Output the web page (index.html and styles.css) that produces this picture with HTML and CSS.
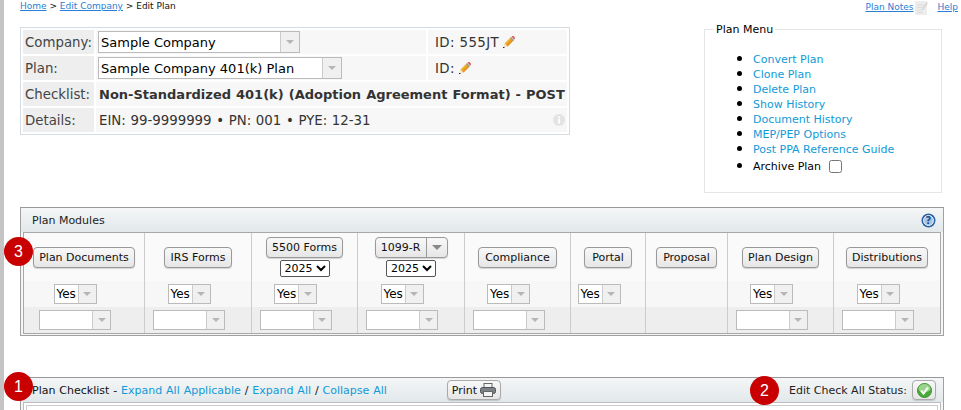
FILE: index.html
```html
<!DOCTYPE html>
<html lang="en">
<head>
    <meta charset="UTF-8">
    <title>Edit Plan</title>
    <link rel="stylesheet" href="styles.css">
</head>
<body>
    <div class="top">
        <div class="top-left">
            <div class="breadcrumb"><a href="#">Home</a> &gt; <a href="#">Edit Company</a> &gt; Edit Plan</div>
            <div class="info">
                <div class="info-label">Company:</div>
                <div class="info-value">
                    <span class="combo combo-company"><span class="combo-text">Sample Company</span><span class="combo-arrow"></span></span>
                </div>
                <div class="info-id"><span>ID: 555JT</span>
                    <svg class="pencil" viewBox="0 0 12 12"><path d="M1.500 7.500L7.500 1.500l3 3-6 6z" fill="#efb02e"/><path d="M3 9L9 3l1.500 1.500-6 6z" fill="#e5941f"/><path d="M7.500 1.500l3 3" stroke="#9a9a9a" stroke-width="1.500"/><path d="M8.500.8L9.300 0H10.500L12 1.500V2.700L11.200 3.500z" fill="#d9605c"/><path d="M1.500 7.500l3 3-3 .5-.5-.5z" fill="#f1dfc0"/><rect x="0" y="11" width="1.500" height="1" fill="#222"/></svg>
                </div>
                <div class="info-label">Plan:</div>
                <div class="info-value">
                    <span class="combo combo-plan"><span class="combo-text">Sample Company 401(k) Plan</span><span class="combo-arrow"></span></span>
                </div>
                <div class="info-id"><span>ID:</span>
                    <svg class="pencil" viewBox="0 0 12 12"><path d="M1.500 7.500L7.500 1.500l3 3-6 6z" fill="#efb02e"/><path d="M3 9L9 3l1.500 1.500-6 6z" fill="#e5941f"/><path d="M7.500 1.500l3 3" stroke="#9a9a9a" stroke-width="1.500"/><path d="M8.500.8L9.300 0H10.500L12 1.500V2.700L11.200 3.500z" fill="#d9605c"/><path d="M1.500 7.500l3 3-3 .5-.5-.5z" fill="#f1dfc0"/><rect x="0" y="11" width="1.500" height="1" fill="#222"/></svg>
                </div>
                <div class="info-label">Checklist:</div>
                <div class="info-value info-wide info-bold"><span>Non-Standardized 401(k) (Adoption Agreement Format) - POST</span></div>
                <div class="info-label">Details:</div>
                <div class="info-value info-wide info-details">
                    <span>EIN: 99-9999999 • PN: 001 • PYE: 12-31</span>
                    <svg class="info-icon" viewBox="0 0 12 12"><circle cx="6" cy="6" r="6" fill="#e4e4e4"/><rect x="5" y="5" width="2" height="4.500" fill="#fff"/><rect x="5" y="2.500" width="2" height="1.600" fill="#fff"/></svg>
                </div>
            </div>
        </div>
        <div class="top-right">
            <div class="top-links">
                <a href="#">Plan Notes</a>
                <svg class="note-icon" viewBox="0 0 13 15"><rect x="0" y="1" width="12" height="14" fill="#ededed"/><path d="M2 5h8M2 7.500h8M2 10h6M2 12.500h6" stroke="#dcdcdc"/><path d="M7 9l4.500-7 1.500 1-4.500 7z" fill="#d8d8d8"/></svg>
                <a class="help-link" href="#">Help</a>
            </div>
            <fieldset class="plan-menu">
                <legend>Plan Menu</legend>
                <ul>
                    <li><a href="#">Convert Plan</a></li>
                    <li><a href="#">Clone Plan</a></li>
                    <li><a href="#">Delete Plan</a></li>
                    <li><a href="#">Show History</a></li>
                    <li><a href="#">Document History</a></li>
                    <li><a href="#">MEP/PEP Options</a></li>
                    <li><a href="#">Post PPA Reference Guide</a></li>
                    <li class="archive">Archive Plan <input type="checkbox"></li>
                </ul>
            </fieldset>
        </div>
    </div>

    <div class="panel modules-panel">
        <div class="panel-head">
            <span>Plan Modules</span>
            <svg class="help-icon" viewBox="0 0 15 15"><circle cx="7.500" cy="7.500" r="7" fill="#2c64a6"/><circle cx="7.500" cy="7.500" r="5" fill="#a9c6e6" stroke="#e8f0f8"/><text x="7.500" y="11" text-anchor="middle" class="help-mark">?</text></svg>
        </div>
        <div class="modules">
            <div class="cell r1"><button class="btn">Plan Documents</button></div>
            <div class="cell r1"><button class="btn btn-wide">IRS Forms</button></div>
            <div class="cell r1">
                <button class="btn btn-small">5500 Forms</button>
                <select class="year"><option>2025</option></select>
            </div>
            <div class="cell r1">
                <span class="btn btn-small split"><span class="split-text">1099-R</span><span class="split-arrow"></span></span>
                <select class="year"><option>2025</option></select>
            </div>
            <div class="cell r1"><button class="btn btn-wide">Compliance</button></div>
            <div class="cell r1"><button class="btn btn-portal">Portal</button></div>
            <div class="cell r1"><button class="btn btn-wide">Proposal</button></div>
            <div class="cell r1"><button class="btn">Plan Design</button></div>
            <div class="cell r1"><button class="btn">Distributions</button></div>

            <div class="cell r2"><span class="combo combo-yes"><span class="combo-text">Yes</span><span class="combo-arrow"></span></span></div>
            <div class="cell r2"><span class="combo combo-yes"><span class="combo-text">Yes</span><span class="combo-arrow"></span></span></div>
            <div class="cell r2"><span class="combo combo-yes"><span class="combo-text">Yes</span><span class="combo-arrow"></span></span></div>
            <div class="cell r2"><span class="combo combo-yes"><span class="combo-text">Yes</span><span class="combo-arrow"></span></span></div>
            <div class="cell r2"><span class="combo combo-yes"><span class="combo-text">Yes</span><span class="combo-arrow"></span></span></div>
            <div class="cell r2"><span class="combo combo-yes"><span class="combo-text">Yes</span><span class="combo-arrow"></span></span></div>
            <div class="cell r2"></div>
            <div class="cell r2"><span class="combo combo-yes"><span class="combo-text">Yes</span><span class="combo-arrow"></span></span></div>
            <div class="cell r2"><span class="combo combo-yes"><span class="combo-text">Yes</span><span class="combo-arrow"></span></span></div>

            <div class="cell r3"><span class="combo combo-empty"><span class="combo-text"></span><span class="combo-arrow"></span></span></div>
            <div class="cell r3"><span class="combo combo-empty"><span class="combo-text"></span><span class="combo-arrow"></span></span></div>
            <div class="cell r3"><span class="combo combo-empty"><span class="combo-text"></span><span class="combo-arrow"></span></span></div>
            <div class="cell r3"><span class="combo combo-empty"><span class="combo-text"></span><span class="combo-arrow"></span></span></div>
            <div class="cell r3"><span class="combo combo-empty"><span class="combo-text"></span><span class="combo-arrow"></span></span></div>
            <div class="cell r3"></div>
            <div class="cell r3"></div>
            <div class="cell r3"><span class="combo combo-empty"><span class="combo-text"></span><span class="combo-arrow"></span></span></div>
            <div class="cell r3"><span class="combo combo-empty"><span class="combo-text"></span><span class="combo-arrow"></span></span></div>
        </div>
        <span class="badge badge-3">3</span>
    </div>

    <div class="panel checklist-panel">
        <div class="panel-head checklist-head">
            <div class="checklist-title">Plan Checklist - <a href="#">Expand All Applicable</a> / <a href="#">Expand All</a> / <a href="#">Collapse All</a></div>
            <button class="btn print-btn">Print
                <svg class="print-icon" viewBox="0 0 16 14"><rect x="4" y=".5" width="8" height="4" fill="#f4f4f4" stroke="#666"/><rect x=".5" y="4.500" width="15" height="6" rx="2" fill="#7c8287" stroke="#4e5256"/><rect x="3.500" y="8.500" width="9" height="5" fill="#f4f4f4" stroke="#666"/></svg>
            </button>
            <div class="status">Edit Check All Status:
                <span class="btn status-btn">
                    <svg class="check-icon" viewBox="0 0 15 15"><circle cx="7.500" cy="7.500" r="7" fill="#49a93a" stroke="#3a8f2d"/><path d="M1.500 6a6 5 0 0 1 12 0a6 3 0 0 1-12 0z" fill="#9ad38c"/><path d="M4 7.500l2.500 3 4.500-6" fill="none" stroke="#f2f7ef" stroke-width="2.200"/></svg>
                </span>
            </div>
        </div>
        <div class="checklist-body"><div class="checklist-inner"></div></div>
        <span class="badge badge-1">1</span>
        <span class="badge badge-2">2</span>
    </div>
</body>
</html>
```

FILE: styles.css
```css
html {
    overflow: hidden;
}

body {
    font-family: "DejaVu Sans", Verdana, sans-serif;
    font-size: 11px;
    color: #000;
    background-color: #fff;
    margin: 0;
    height: 410px;
    overflow: hidden;
    box-sizing: border-box;
    border-left: 4px solid;
    border-image: linear-gradient(to right, #c4c4c4 0, #c4c4c4 3px, #7a7a7a 3px, #7a7a7a 4px) 1;
    padding-left: 16px;
}

a {
    color: #0f9ad8;
    text-decoration: none;
}

.top {
    display: flex;
    width: 938px;
    justify-content: space-between;
}

/* breadcrumb + info box */
.breadcrumb {
    font-size: 9px;
    line-height: 11px;
    padding-top: 1px;
    padding-bottom: 15px;
    color: #111;
}

.breadcrumb a,
.top-links a {
    color: #2a7ed3;
    text-decoration: underline;
}

.info {
    display: grid;
    grid-template-columns: 71px 330px 139px;
    grid-auto-rows: 24px;
    gap: 2px;
    width: 544px;
    height: 102px;
    padding: 2px;
    border: 1px solid #d5dde3;
    font-size: 13.33px;
    color: #333;
    background-color: #fff;
}

.info-label {
    display: flex;
    align-items: center;
    padding-left: 2px;
    background-color: #eee;
    color: #444;
}

.info-value,
.info-id {
    display: flex;
    align-items: center;
    padding-left: 2px;
    background-color: #f7f7f7;
}

.info-id {
    padding-left: 7px;
    gap: 4px;
    letter-spacing: 0.4px;
}

.info-wide {
    grid-column: span 2;
    white-space: nowrap;
    padding-left: 3px;
}

.info-bold {
    font-size: 13px;
    font-weight: bold;
    word-spacing: 0.5px;
}

.info-details {
    justify-content: space-between;
    padding-right: 2px;
    word-spacing: 0.4px;
}

.pencil {
    width: 12px;
    height: 12px;
}

.info-icon {
    width: 12px;
    height: 12px;
}

/* fake combo boxes */
.combo {
    display: inline-flex;
    box-sizing: border-box;
    border: 1px solid #bbb;
    background-color: #fff;
    color: #000;
    vertical-align: top;
}

.combo-text {
    flex: 1;
    padding-left: 2px;
    overflow: hidden;
    white-space: nowrap;
}

.combo-arrow {
    display: flex;
    align-items: center;
    justify-content: center;
    background-color: #f0f0f0;
    border-left: 1px solid #ccc;
}

.combo-arrow::after {
    content: "";
    border-left: 4px solid transparent;
    border-right: 4px solid transparent;
    border-top: 4px solid #b5b5b5;
}

.combo-company,
.combo-plan {
    height: 22px;
    font-size: 13px;
    line-height: 21px;
}

.combo-company {
    width: 202px;
}

.combo-plan {
    width: 244px;
}

.combo-company .combo-arrow,
.combo-plan .combo-arrow {
    width: 18px;
}

.combo-yes {
    width: 43px;
    height: 20px;
    margin-right: 18px;
    font-size: 12px;
    line-height: 18px;
}

.combo-yes .combo-arrow {
    width: 17px;
}

.combo-empty {
    width: 72px;
    height: 20px;
    margin-right: 18px;
}

.combo-empty .combo-arrow {
    width: 17px;
}

/* plan menu */
.top-right {
    width: 254px;
}

.top-links {
    display: flex;
    align-items: flex-start;
    justify-content: flex-end;
    height: 23px;
    padding-top: 2px;
    box-sizing: border-box;
    font-size: 9px;
    line-height: 11px;
}

.note-icon {
    width: 13px;
    height: 15px;
    margin: -2px 9px 0 2px;
}

.plan-menu {
    box-sizing: border-box;
    width: 238px;
    height: 170px;
    margin: 0;
    padding: 0;
    border: 1px solid #e5e5e5;
    font-size: 11px;
}

.plan-menu legend {
    margin-left: 9px;
    padding: 0 2px;
    line-height: 13px;
}

.plan-menu ul {
    margin: 15px 0 0;
    padding: 0 0 0 48px;
}

.plan-menu li {
    height: 15px;
    line-height: 15px;
}

.plan-menu li::marker {
    font-size: 15px;
}

.plan-menu .archive {
    margin-top: 2px;
}

.archive input {
    width: 13px;
    height: 13px;
    margin: 0 0 0 4px;
    vertical-align: -3px;
}

/* panels */
.panel {
    position: relative;
    width: 924px;
    box-sizing: border-box;
    border: 1px solid #a0a0a0;
    border-top-color: #999;
    padding: 0 2px 2px;
    background-color: #f4f6f7;
}

.modules-panel {
    height: 129px;
    margin-top: 14px;
}

.checklist-panel {
    height: 33px;
    margin-top: 41px;
    padding-bottom: 0;
    border-bottom: none;
}

.panel-head {
    display: flex;
    align-items: center;
    justify-content: space-between;
    height: 24px;
    margin: 0 -2px;
    padding: 0 7px 0 11px;
    background-image: linear-gradient(to bottom, #f4f6f7, #e2e8eb);
    color: #222;
    font-size: 11px;
}

.help-icon {
    width: 15px;
    height: 15px;
}

.help-mark {
    font-size: 10px;
    font-weight: bold;
    fill: #1c4f8f;
}

.modules {
    display: grid;
    grid-template-columns: 121px 107px 106px 107px 106px 75px 82px 106px 106px;
    grid-template-rows: 48px 26px 26px;
    height: 102px;
    box-sizing: border-box;
    border: 1px solid #a8a8a8;
}

.cell {
    display: flex;
    flex-direction: column;
    align-items: center;
    justify-content: center;
    gap: 2px;
    border-right: 1px solid #ccc;
}

.cell:nth-child(9n) {
    border-right: none;
}

.r1 {
    background-color: #fafafa;
}

.r2 {
    background-color: #f7f7f7;
}

.r3 {
    background-color: #eee;
}

.btn {
    display: inline-flex;
    align-items: center;
    justify-content: center;
    box-sizing: border-box;
    height: 21px;
    margin: 0;
    padding: 0 5px;
    border: 1px solid #999;
    border-radius: 4px;
    background-image: linear-gradient(to bottom, #f8f8f8, #e6e6e6);
    box-shadow: 0 1px 1px rgba(0, 0, 0, 0.15);
    color: #111;
    font-family: "DejaVu Sans", Verdana, sans-serif;
    font-size: 11px;
    white-space: nowrap;
}

.btn-wide {
    padding: 0 6px;
}

.btn-portal {
    padding: 0 7px;
}

.split {
    padding: 0;
    width: 73px;
}

.split-text {
    flex: 1;
    text-align: center;
    line-height: 19px;
    border-right: 1px solid #999;
}

.split-arrow {
    display: flex;
    align-items: center;
    justify-content: center;
    width: 20px;
}

.split-arrow::after {
    content: "";
    border-left: 5px solid transparent;
    border-right: 5px solid transparent;
    border-top: 5px solid #888;
}

.year {
    box-sizing: border-box;
    width: 50px;
    height: 17px;
    padding: 0;
    font-family: "DejaVu Sans", Verdana, sans-serif;
    font-size: 11px;
    border: 1px solid #555;
    border-radius: 2px;
    background-color: #fff;
}

/* checklist */
.checklist-head {
    padding: 0 7px 0 11px;
}

.checklist-title {
    flex: 1;
    color: #111;
    word-spacing: 0.4px;
}

.print-btn {
    gap: 3px;
    width: 54px;
    height: 20px;
    margin-right: 288px;
    padding: 0;
    border-color: #aaa;
}

.print-icon {
    width: 16px;
    height: 14px;
}

.status {
    display: flex;
    align-items: center;
    gap: 5px;
}

.status-btn {
    width: 24px;
    height: 20px;
    padding: 0;
    border-color: #aaa;
}

.check-icon {
    width: 15px;
    height: 15px;
}

.checklist-body {
    box-sizing: border-box;
    height: 8px;
    padding: 2px 2px 0;
    background-color: #fff;
    border: 1px solid #bbb;
    border-bottom: none;
}

.checklist-inner {
    box-sizing: border-box;
    height: 5px;
    border: 1px solid #ccc;
    border-bottom: none;
    background-color: #fff;
}

/* numbered call-outs */
.badge {
    position: absolute;
    width: 29px;
    height: 29px;
    border-radius: 50%;
    background-color: #c80000;
    color: #fff;
    font-family: "Liberation Sans", Arial, sans-serif;
    font-size: 16px;
    line-height: 29px;
    text-align: center;
}

.badge-3 {
    left: -17px;
    top: 29px;
}

.badge-1 {
    left: -17px;
    top: -6px;
}

.badge-2 {
    left: 729px;
    top: -2px;
}
```
